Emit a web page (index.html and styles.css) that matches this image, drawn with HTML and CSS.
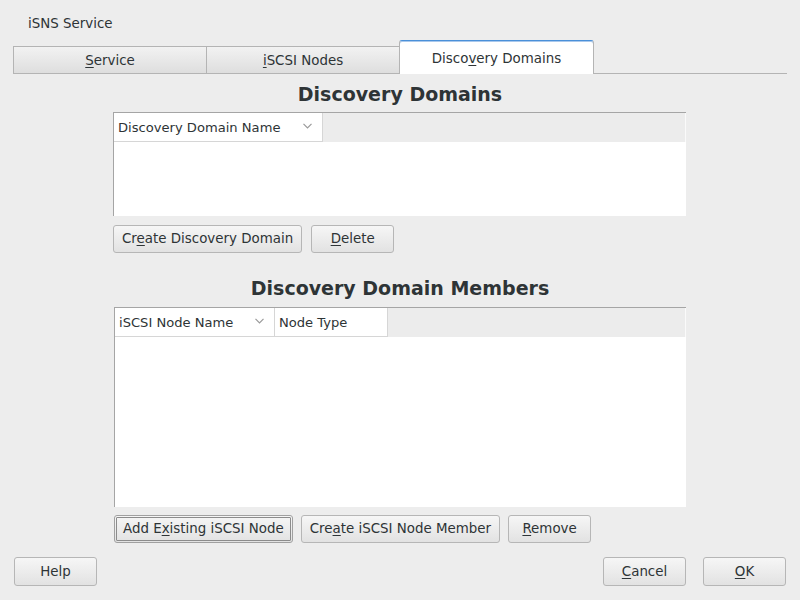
FILE: index.html
```html
<!DOCTYPE html>
<html>
<head>
<meta charset="utf-8">
<link rel="stylesheet" href="styles.css">
</head>
<body>
<div class="window">
  <div class="title">iSNS Service</div>
  <div class="tabs">
    <div class="tab first"><span class="mn">S</span>ervice</div>
    <div class="tab"><span class="mn">i</span>SCSI Nodes</div>
    <div class="tab active">Disco<span class="mn">v</span>ery Domains</div>
  </div>
  <div class="content">
    <h2 class="heading h-first">Discovery Domains</h2>
    <div class="panel">
      <div class="table t1">
        <div class="thead">
          <div class="th w-domain">Discovery Domain Name<svg class="chev" width="9" height="6" viewBox="0 0 9 6"><polyline points="0.5,0.8 4.5,4.8 8.5,0.8" fill="none" stroke="#9a9a9a" stroke-width="1.2"/></svg></div>
          <div class="th-rest"></div>
        </div>
        <div class="tbody"></div>
      </div>
      <div class="btnrow">
        <button class="btn">Cr<span class="mn">e</span>ate Discovery Domain</button>
        <button class="btn"><span class="mn">D</span>elete</button>
      </div>
    </div>
    <h2 class="heading h-second">Discovery Domain Members</h2>
    <div class="panel">
      <div class="table t2">
        <div class="thead">
          <div class="th w-node">iSCSI Node Name<svg class="chev" width="9" height="6" viewBox="0 0 9 6"><polyline points="0.5,0.8 4.5,4.8 8.5,0.8" fill="none" stroke="#9a9a9a" stroke-width="1.2"/></svg></div>
          <div class="th w-type">Node Type</div>
          <div class="th-rest"></div>
        </div>
        <div class="tbody"></div>
      </div>
      <div class="btnrow row2">
        <button class="btn focused">Add E<span class="mn">x</span>isting iSCSI Node</button>
        <button class="btn">Cre<span class="mn">a</span>te iSCSI Node Member</button>
        <button class="btn"><span class="mn">R</span>emove</button>
      </div>
    </div>
  </div>
  <div class="footer">
    <button class="btn fbtn">Help</button>
    <div class="spacer"></div>
    <button class="btn fbtn"><span class="mn">C</span>ancel</button>
    <button class="btn fbtn"><span class="mn">O</span>K</button>
  </div>
</div>
</body>
</html>
```

FILE: styles.css
```css
html, body {
  margin: 0;
  padding: 0;
}
body {
  background: #ededed;
  font-family: "DejaVu Sans", sans-serif;
  font-size: 13.4px;
  color: #2e3436;
  width: 800px;
  height: 600px;
  overflow: hidden;
}
.window {
  display: flex;
  flex-direction: column;
  height: 600px;
}
.title {
  padding: 16px 0 0 28px;
  line-height: 16px;
  height: 16px;
}
.mn {
  text-decoration: underline;
  text-underline-offset: 2px;
}
.tabs {
  margin: 8px 13px 0;
  height: 33px;
  border-bottom: 1px solid #b4b4b4;
  display: flex;
  align-items: flex-end;
}
.tab {
  box-sizing: border-box;
  width: 194px;
  height: 27px;
  border: 1px solid #b4b4b4;
  border-bottom: none;
  background: linear-gradient(#f2f2f2, #dedede);
  display: flex;
  align-items: center;
  justify-content: center;
  margin-left: -1px;
}
.tab.first {
  margin-left: 0;
}
.tab.active {
  width: 195px;
  height: 34px;
  margin-bottom: -1px;
  background: #fff;
  border-top: 1px solid #4a90d9;
  border-radius: 3px 3px 0 0;
  box-shadow: inset 0 1px 0 #a9c8ec;
  padding-top: 1px;
}
.content {
  display: flex;
  flex-direction: column;
}
.heading {
  margin: 0;
  text-align: center;
  font-size: 19px;
  font-weight: bold;
  line-height: 22px;
  color: #2e3436;
}
.h-first {
  margin-top: 9px;
}
.h-second {
  margin-top: 24px;
}
.panel {
  margin-left: 113px;
  width: 573px;
}
.table {
  box-sizing: border-box;
  border-top: 1px solid #a5a5a5;
  border-left: 1px solid #a5a5a5;
  background: #fff;
  display: flex;
  flex-direction: column;
}
.t1 {
  margin-top: 7px;
  height: 104px;
}
.t2 {
  margin-top: 8px;
  height: 200px;
  margin-left: 1px;
}
.thead {
  display: flex;
  height: 29px;
  background: #ececec;
  flex: none;
}
.th {
  box-sizing: border-box;
  background: #fff;
  border-right: 1px solid #d6d6d6;
  border-bottom: 1px solid #d6d6d6;
  display: flex;
  align-items: center;
  padding: 1px 0 0 4px;
  position: relative;
  font-size: 13.1px;
}
.th-rest {
  flex: 1;
  border-right: 1px solid #fafafa;
}
.w-domain {
  width: 209px;
}
.w-node {
  width: 160px;
}
.w-type {
  width: 113px;
}
.chev {
  position: absolute;
  right: 10px;
  top: 10px;
}
.tbody {
  flex: 1;
  background: #fff;
}
.btnrow {
  display: flex;
  gap: 9px;
  margin-top: 9px;
}
.row2 {
  margin-top: 8px;
  margin-left: 1px;
  gap: 8px;
}
.btn {
  box-sizing: border-box;
  height: 28px;
  min-width: 83px;
  padding: 0 8px;
  border: 1px solid #b6b6b6;
  border-radius: 3px;
  background: linear-gradient(#f6f6f6, #e2e2e2);
  font-family: "DejaVu Sans", sans-serif;
  font-size: 13.4px;
  color: #2e3436;
  line-height: 16px;
  margin: 0;
}
.btn.focused {
  border-color: #a0a0a0;
  outline: 1px solid #8c8c8c;
  outline-offset: -3px;
}
.footer {
  display: flex;
  margin-top: 14px;
  padding: 0 14px;
  gap: 17px;
}
.spacer {
  flex: 1;
}
.fbtn {
  height: 29px;
}
```
